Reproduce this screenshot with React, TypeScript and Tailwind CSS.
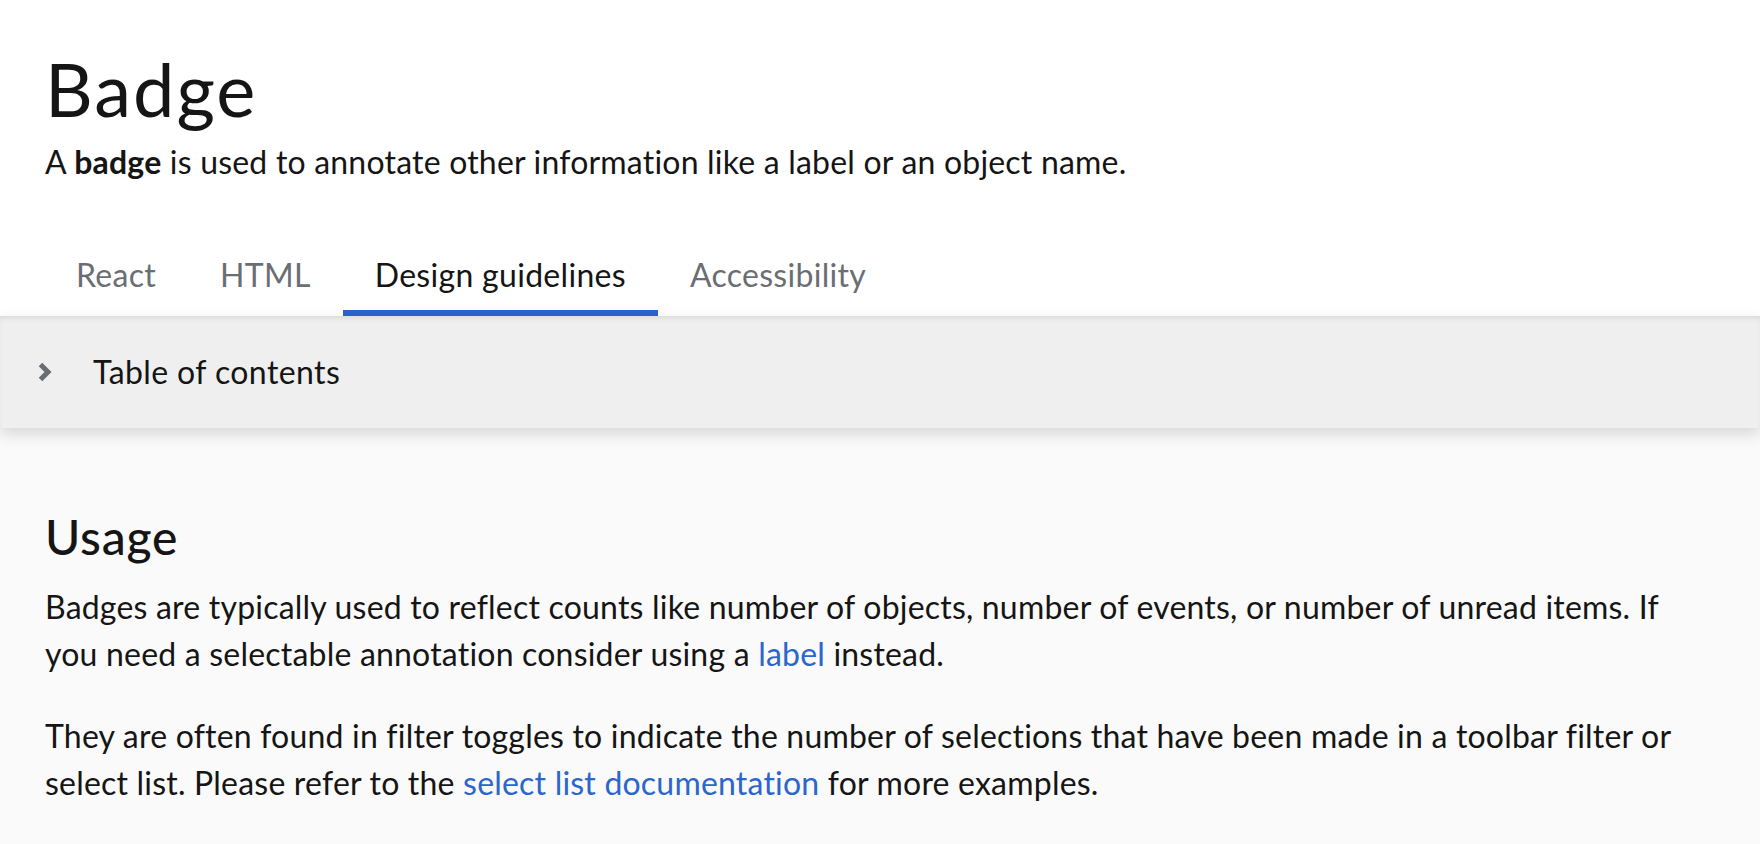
import { useState } from "react";

const tabs = ["React", "HTML", "Design guidelines", "Accessibility"];

export default function App() {
  const [active, setActive] = useState("Design guidelines");
  const [tocOpen, setTocOpen] = useState(false);

  return (
    <div className="min-h-screen bg-[#fafafa] text-[#151515]" style={{ fontFamily: "Lato, 'Open Sans', sans-serif" }}>
      {/* Page header */}
      <header className="bg-white pl-[45px] pt-[46px]">
        <h1 className="text-[74px] leading-[86px] font-normal tracking-[2px]">Badge</h1>
        <p className="mt-[6px] text-[32px] leading-[48px] tracking-[0.2px]">
          A <b className="font-bold">badge</b> is used to annotate other information like a label or an object name.
        </p>
        <nav className="-ml-px mt-[31px] flex">
          {tabs.map((t) => (
            <button
              key={t}
              onClick={() => setActive(t)}
              className={
                "px-[32px] pt-[40px] pb-[17px] text-[32px] leading-[36px] tracking-[0.3px] border-b-[6px] " +
                (active === t ? "border-[#2b64cf] text-[#151515]" : "border-transparent text-[#6a6e73]")
              }
            >
              {t}
            </button>
          ))}
        </nav>
      </header>

      {/* Table of contents */}
      <div className="relative z-10 bg-[#efefef] shadow-[0_6px_14px_rgba(0,0,0,0.14),inset_0_4px_6px_-3px_rgba(0,0,0,0.12)]">
        <button onClick={() => setTocOpen(!tocOpen)} className="flex h-[112px] w-full items-center text-left">
          <svg
            width="16"
            height="22"
            viewBox="0 0 16 22"
            className={"ml-[37px] shrink-0 transition-transform " + (tocOpen ? "rotate-90" : "")}
            fill="none"
            stroke="#6a6e73"
            strokeWidth="5"
          >
            <polyline points="3.5,3.5 11,11 3.5,18.5" />
          </svg>
          <span className="ml-[40px] text-[32px] leading-[36px] tracking-[0.4px] text-[#151515]">Table of contents</span>
        </button>
      </div>

      {/* Content */}
      <main className="pl-[45px] pr-[40px] pt-[81px] pb-10">
        <h2 className="text-[48px] leading-[56px] font-medium tracking-[0.8px]">Usage</h2>
        <p className="mt-[18px] text-[32px] leading-[47px] tracking-[0.2px]">
          Badges are typically used to reflect counts like number of objects, number of events, or number of unread items. If
          <br />
          you need a selectable annotation consider using a{" "}
          <a href="#" className="text-[#2b66cc]">label</a> instead.
        </p>
        <p className="mt-[35px] text-[32px] leading-[47px] tracking-[0.2px]">
          They are often found in filter toggles to indicate the number of selections that have been made in a toolbar filter or
          <br />
          select list. Please refer to the{" "}
          <a href="#" className="text-[#2b66cc]">select list documentation</a> for more examples.
        </p>
      </main>
    </div>
  );
}
